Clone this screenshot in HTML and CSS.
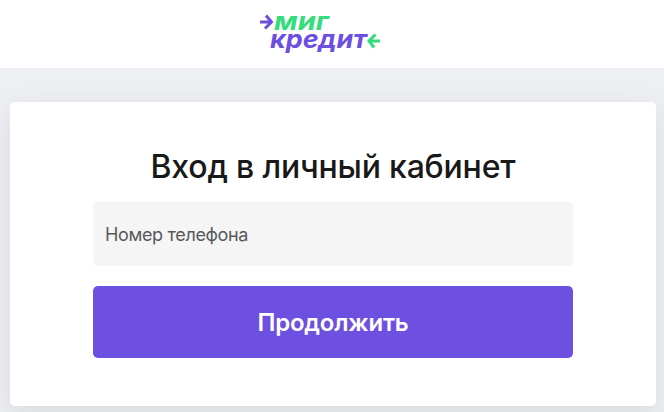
FILE: index.html
```
<!DOCTYPE html>
<html lang="ru">

<head>
    <meta charset="UTF-8">
    <meta name="viewport" content="width=device-width, initial-scale=1.0">
    <title>Вход в личный кабинет</title>
    <link rel="stylesheet" href="styles.css">
</head>

<body>
    <header class="header">
        <a href="#" class="logo">
            <svg width="124" height="64" viewBox="0 0 124 64">
                <path class="arrow-in" d="M2 22H13M8 15.500L13.500 22L7 28.500" />
                <text class="logo-top" x="16" y="29.500" textLength="55" lengthAdjust="spacingAndGlyphs">миг</text>
                <text class="logo-bottom" x="12" y="48" textLength="97" lengthAdjust="spacingAndGlyphs">кредит</text>
                <path class="arrow-out" d="M122 41H111M117.500 34.500L111 41L116 47.500" />
            </svg>
        </a>
    </header>

    <main class="login-card">
        <h1>Вход в личный кабинет</h1>
        <form class="login-form">
            <input type="tel" class="phone-input" placeholder="Номер телефона">
            <button type="button" class="submit-btn">Продолжить</button>
        </form>
    </main>
</body>

</html>
```

FILE: styles.css
```
* {
    margin: 0;
    padding: 0;
    box-sizing: border-box;
}

body {
    background-color: #eeeff3;
    font-family: Inter, "Open Sans", sans-serif;
    color: #191919;
    overflow: hidden;
}

.header {
    display: flex;
    justify-content: center;
    height: 68px;
    padding-right: 24px;
    background-color: #fff;
}

.logo {
    height: 64px;
}

.logo svg {
    display: block;
}

.logo text {
    font-family: Inter, sans-serif;
    font-size: 25px;
    font-weight: 700;
    font-style: italic;
}

.logo-top {
    fill: #35dc7c;
}

.logo-bottom {
    fill: #6c4fe0;
}

.arrow-in,
.arrow-out {
    fill: none;
    stroke-width: 3;
}

.arrow-in {
    stroke: #6c4fe0;
}

.arrow-out {
    stroke: #35dc7c;
}

.login-card {
    height: 304px;
    margin: 34px 8px 6px 10px;
    padding: 45px 83px 0;
    background-color: #fff;
    border-radius: 5px;
    box-shadow: 0 10px 30px rgba(30, 35, 50, 0.1);
}

.login-card h1 {
    height: 40px;
    margin-bottom: 15px;
    font-size: 32px;
    font-weight: 500;
    line-height: 40px;
    text-align: center;
    white-space: nowrap;
    letter-spacing: -0.2px;
}

.login-form {
    display: flex;
    flex-direction: column;
    gap: 20px;
}

.phone-input {
    height: 64px;
    padding: 0 12px;
    border: none;
    border-radius: 5px;
    background-color: #f5f5f5;
    font-family: inherit;
    font-size: 18px;
}

.phone-input::placeholder {
    color: #58595b;
    opacity: 1;
    letter-spacing: -0.35px;
}

.submit-btn {
    height: 72px;
    border: none;
    border-radius: 5px;
    background-color: #6e50e1;
    color: #fff;
    font-family: inherit;
    font-size: 24px;
    font-weight: 600;
    letter-spacing: -0.2px;
}
```
